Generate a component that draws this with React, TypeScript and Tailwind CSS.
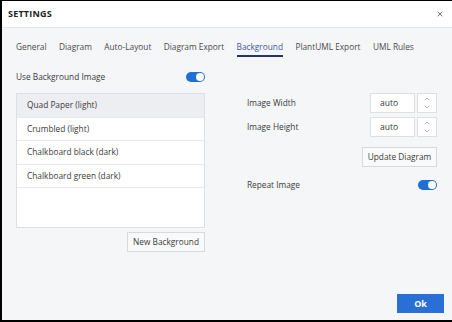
import { ChevronDown, ChevronUp, X } from "lucide-react";

const tabs = [
    "General",
    "Diagram",
    "Auto-Layout",
    "Diagram Export",
    "Background",
    "PlantUML Export",
    "UML Rules",
];

const backgrounds = [
    "Quad Paper (light)",
    "Crumbled (light)",
    "Chalkboard black (dark)",
    "Chalkboard green (dark)",
];

function Toggle() {
    return (
        <div className="flex h-[10px] w-[19px] items-center justify-end rounded-full bg-[#1f6fd6] px-[1px]">
            <div className="h-[8px] w-[8px] rounded-full bg-white" />
        </div>
    );
}

function NumberField({ value }: { value: string }) {
    return (
        <div className="flex items-center gap-[2px]">
            <div className="flex h-[20px] w-[45px] items-center border border-[#dcdfe4] bg-white pl-[9px] text-[8.5px] text-[#3a3a3a]">
                {value}
            </div>
            <div className="flex h-[20px] w-[20px] flex-col items-center justify-center border border-[#dcdfe4] bg-white text-[#888]">
                <ChevronUp className="h-[8px] w-[8px]" strokeWidth={2} />
                <ChevronDown className="h-[8px] w-[8px]" strokeWidth={2} />
            </div>
        </div>
    );
}

export default function App() {
    return (
        <div
            className="flex h-[322px] w-[452px] flex-col border-t border-b-2 border-l-2 border-black bg-[#f5f6f8] text-[#3a3a3a]"
            style={{ fontFamily: '"Open Sans", "Noto Sans", sans-serif' }}
        >
            {/* Header */}
            <header className="flex h-[27px] shrink-0 items-center justify-between border-b border-[#e3e5e8] bg-white pl-[6px] pr-[8px]">
                <h1 className="text-[9px] font-bold tracking-[0.2px] text-[#222]">SETTINGS</h1>
                <X className="h-[8px] w-[8px] text-[#555]" strokeWidth={2.5} />
            </header>

            {/* Tabs */}
            <nav className="flex h-[29px] shrink-0 items-end gap-[12.4px] pl-[14px]">
                {tabs.map((tab) => (
                    <div
                        key={tab}
                        className={
                            tab === "Background"
                                ? "whitespace-nowrap border-b-2 border-[#25346a] pb-[2px] text-[8.3px] text-[#3b5b9c]"
                                : "whitespace-nowrap border-b-2 border-transparent pb-[2px] text-[8.3px] text-[#4a4a4a]"
                        }
                    >
                        {tab}
                    </div>
                ))}
            </nav>

            {/* Content */}
            <main className="flex flex-1 gap-[42px] pl-[14px] pr-[15px]">
                <section className="flex w-[189px] flex-col">
                    <div className="flex h-[36px] items-center justify-between pt-[4px]">
                        <span className="text-[8.3px]">Use Background Image</span>
                        <Toggle />
                    </div>
                    <div className="flex h-[135px] flex-col border border-[#dcdfe4] bg-white">
                        {backgrounds.map((bg, i) => (
                            <div
                                key={bg}
                                className={
                                    i === 0
                                        ? "flex h-[23.5px] items-center border-b border-[#e6e8eb] bg-[#eceef1] pl-[10px] text-[8.3px]"
                                        : "flex h-[23.5px] items-center border-b border-[#e6e8eb] pl-[10px] text-[8.3px]"
                                }
                            >
                                {bg}
                            </div>
                        ))}
                    </div>
                    <div className="mt-[4px] flex justify-end">
                        <button className="h-[20px] w-[78px] border border-[#d6d9de] bg-[#f9fafb] text-[8.3px] text-[#3a3a3a]">
                            New Background
                        </button>
                    </div>
                </section>

                <section className="flex flex-1 flex-col pt-[36px]">
                    <div className="flex items-center justify-between">
                        <span className="text-[8.3px]">Image Width</span>
                        <NumberField value="auto" />
                    </div>
                    <div className="mt-[4px] flex items-center justify-between">
                        <span className="text-[8.3px]">Image Height</span>
                        <NumberField value="auto" />
                    </div>
                    <div className="mt-[10px] flex justify-end">
                        <button className="h-[20px] w-[75px] border border-[#d6d9de] bg-[#f9fafb] text-[8.3px] text-[#3a3a3a]">
                            Update Diagram
                        </button>
                    </div>
                    <div className="mt-[12px] flex items-center justify-between">
                        <span className="text-[8.3px]">Repeat Image</span>
                        <Toggle />
                    </div>
                </section>
            </main>

            {/* Footer */}
            <footer className="flex shrink-0 justify-end pb-[7px] pr-[8px]">
                <button className="h-[19px] w-[47px] bg-[#2a6fd6] text-[9px] font-bold text-white">Ok</button>
            </footer>
        </div>
    );
}
